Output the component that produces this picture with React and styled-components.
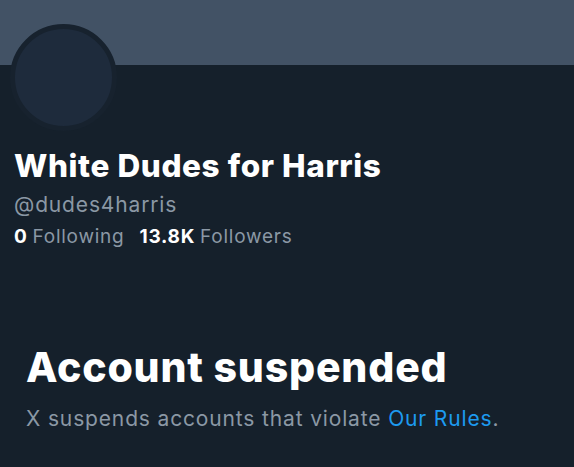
import styled, { createGlobalStyle } from 'styled-components';

const GlobalStyle = createGlobalStyle`
  html, body {
    margin: 0;
    padding: 0;
    background: #15202b;
  }
  body {
    font-family: Inter, "Noto Sans", sans-serif;
  }
`;

const Page = styled.div`
  width: 574px;
  height: 467px;
  background: #15202b;
  overflow: hidden;
`;

const Banner = styled.div`
  height: 65px;
  background: #425265;
`;

const Profile = styled.div`
  padding: 0 14px;
`;

const Avatar = styled.div`
  width: 97px;
  height: 97px;
  margin-top: -41px;
  margin-left: -4px;
  border-radius: 50%;
  background: #1e2b3c;
  border: 5px solid #17222e;
`;

const Name = styled.h1`
  margin: 17px 0 0;
  color: #ffffff;
  font-size: 31.5px;
  font-weight: 800;
  letter-spacing: 0.6px;
  line-height: 36px;
`;

const Handle = styled.div`
  margin-top: 8px;
  color: #8b98a5;
  font-size: 21px;
  letter-spacing: 0.85px;
  line-height: 26px;
`;

const Stats = styled.div`
  display: flex;
  gap: 15px;
  margin-top: 7px;
  font-size: 19px;
  letter-spacing: 0.75px;
  line-height: 24px;
  color: #8b98a5;
`;

const Stat = styled.span`
  b {
    color: #ffffff;
    font-weight: 700;
    margin-right: 5px;
  }
`;

const Notice = styled.div`
  padding: 94px 26px 0;
`;

const Title = styled.h2`
  margin: 0;
  color: #ffffff;
  font-size: 41px;
  font-weight: 800;
  letter-spacing: 0.8px;
  line-height: 48px;
`;

const Message = styled.p`
  margin: 15px 0 0;
  color: #8b98a5;
  font-size: 21px;
  letter-spacing: 0.85px;
  line-height: 26px;
`;

const RulesLink = styled.a`
  color: #1d9bf0;
  text-decoration: none;
`;

export default function App() {
  return (
    <Page>
      <GlobalStyle />
      <Banner />
      <Profile>
        <Avatar />
        <Name>White Dudes for Harris</Name>
        <Handle>@dudes4harris</Handle>
        <Stats>
          <Stat><b>0</b>Following</Stat>
          <Stat><b>13.8K</b>Followers</Stat>
        </Stats>
      </Profile>
      <Notice>
        <Title>Account suspended</Title>
        <Message>
          X suspends accounts that violate <RulesLink href="#">Our Rules</RulesLink>.
        </Message>
      </Notice>
    </Page>
  );
}
